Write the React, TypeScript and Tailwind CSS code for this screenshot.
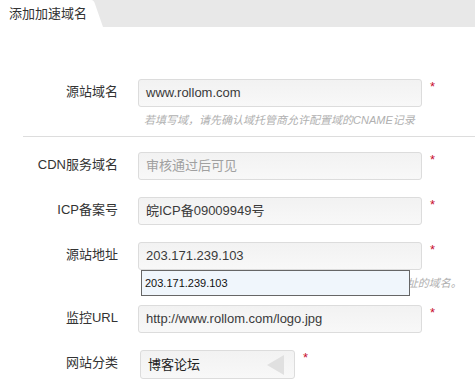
const font = { fontFamily: '"Liberation Sans", "Noto Sans CJK SC", sans-serif' }

function Star() {
  return <span className="ml-[8px] mt-[1px] text-[13px] leading-[14px] text-[#c8102e]">*</span>
}

function Field({ label, value, muted }: { label: string; value: string; muted?: boolean }) {
  return (
    <div className="flex items-start">
      <label className="w-[118px] pt-[5px] text-right text-[13px] leading-[16px] text-[#333]">{label}</label>
      <div
        className={`ml-[20px] flex h-[28px] w-[284px] items-center rounded-[3px] border border-[#dcdcdc] bg-gradient-to-b from-[#f2f2f2] to-[#f8f8f8] px-[7px] text-[13px] ${
          muted ? 'text-[#a0a0a0]' : 'text-[#3a3a3a]'
        }`}
      >
        {value}
      </div>
      <Star />
    </div>
  )
}

function Hint({ children }: { children: React.ReactNode }) {
  return (
    <p className="mt-[6px] whitespace-nowrap pl-[144px] text-[11px] italic leading-[14px] text-[#b0b0b0]">
      {children}
    </p>
  )
}

export default function App() {
  return (
    <div className="h-[386px] w-[475px] overflow-hidden bg-white" style={font}>
      <div className="flex h-[27px] bg-[#e8e8e8]">
        <div className="flex w-[90px] items-center bg-white pl-[9px] text-[13px] text-[#333]">添加加速域名</div>
        <svg width="13" height="27" viewBox="0 0 13 27" className="block">
          <path d="M0 0 H1 Q4 0 5 4 L13 27 H0 Z" fill="#fff" />
        </svg>
      </div>

      <div className="pt-[52px]">
        <Field label="源站域名" value="www.rollom.com" />
        <Hint>若填写域，请先确认域托管商允许配置域的CNAME记录</Hint>
        <div className="ml-[23px] mt-[9px] border-t border-[#dddddd]" />

        <div className="mt-[15px]">
          <Field label="CDN服务域名" value="审核通过后可见" muted />
        </div>
        <div className="mt-[17px]">
          <Field label="ICP备案号" value="皖ICP备09009949号" />
        </div>
        <div className="relative mt-[17px]">
          <Field label="源站地址" value="203.171.239.103" />
          <Hint>多个IP请用英文分号隔开，如无IP，也可以填写源站地址的域名。</Hint>
          <div className="absolute left-[141px] top-[28px] flex h-[26px] w-[269px] items-center border border-[#666] bg-[#f0f6fc] pl-[3px] text-[11px] text-[#111]">
            203.171.239.103
          </div>
        </div>
        <div className="mt-[15px]">
          <Field label="监控URL" value="http://www.rollom.com/logo.jpg" />
        </div>

        <div className="mt-[17px] flex items-start">
          <label className="w-[118px] pt-[5px] text-right text-[13px] leading-[16px] text-[#333]">网站分类</label>
          <div className="ml-[22px] flex h-[29px] w-[155px] items-center justify-between rounded-[3px] border border-[#dcdcdc] bg-gradient-to-b from-[#f2f2f2] to-[#f8f8f8] pl-[7px] pr-[10px] text-[13px] text-[#222]">
            <span>博客论坛</span>
            <svg width="17" height="20" viewBox="0 0 17 20">
              <path d="M17 0 V20 L0 10 Z" fill="#e0e0e0" />
            </svg>
          </div>
          <Star />
        </div>
      </div>
    </div>
  )
}
